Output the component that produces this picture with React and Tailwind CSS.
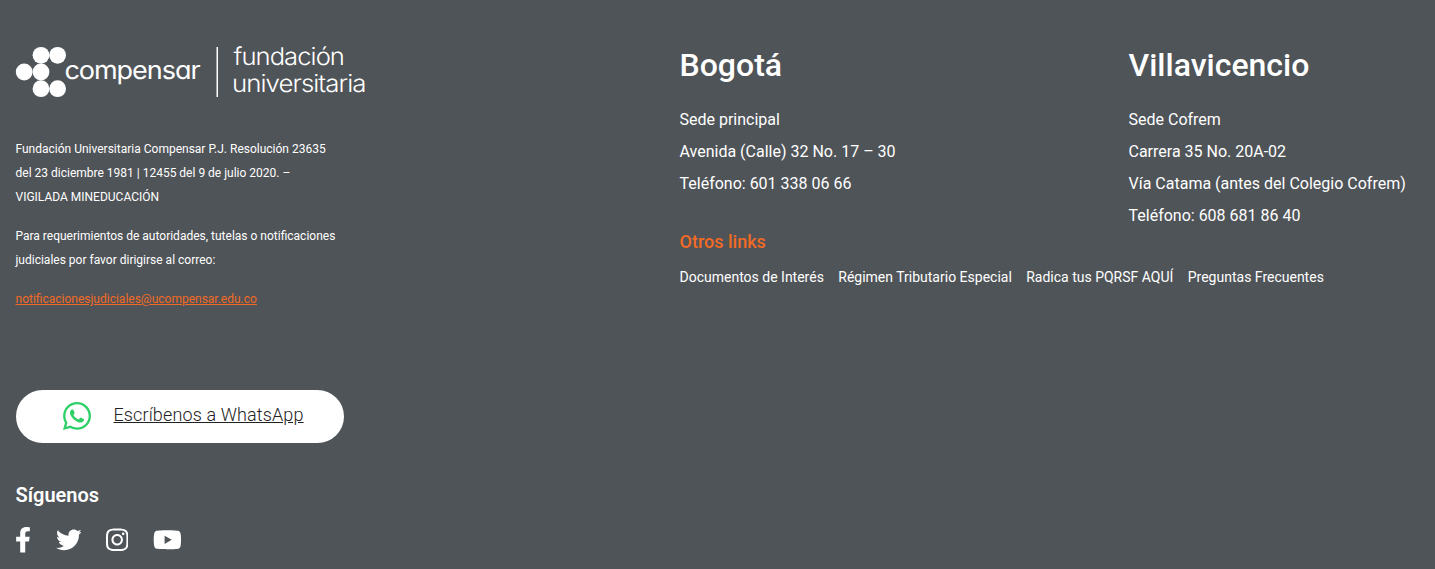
import { FaFacebookF, FaTwitter, FaInstagram, FaYoutube, FaWhatsapp } from "react-icons/fa";

const links = [
  "Documentos de Interés",
  "Régimen Tributario Especial",
  "Radica tus PQRSF AQUÍ",
  "Preguntas Frecuentes",
];

function Logo() {
  return (
    <svg
      className="-ml-[0.5px] mt-[46px] block h-[52px] w-[352px] overflow-visible [text-rendering:geometricPrecision]"
      viewBox="15 46 352 52"
      fill="#fff"
      role="img"
    >
      <circle cx="41" cy="55.3" r="8.4" />
      <circle cx="57.6" cy="55.3" r="8.4" />
      <circle cx="24.2" cy="72" r="8.4" />
      <circle cx="41" cy="72" r="8.4" />
      <circle cx="41" cy="88.7" r="8.4" />
      <circle cx="57.6" cy="88.7" r="8.4" />
      <text
        x="64.5"
        y="78.6"
        className="font-['Inter',sans-serif] [font-feature-settings:'cv11']"
        fontWeight="400"
        fontSize="25.5"
        letterSpacing="-1"
        textLength="135"
        lengthAdjust="spacingAndGlyphs"
      >
        compensar
      </text>
      <rect x="216.5" y="47" width="1.5" height="50" />
      <g className="font-['Inter',sans-serif]" fontWeight="300" fontSize="24.5" letterSpacing="-0.9">
        <text x="233.5" y="65.3" textLength="110.5" lengthAdjust="spacingAndGlyphs">fundación</text>
        <text x="232" y="92.3" textLength="133.5" lengthAdjust="spacingAndGlyphs">universitaria</text>
      </g>
    </svg>
  );
}

function Sede({ title, lines }) {
  return (
    <section className="whitespace-nowrap">
      <h2 className="text-[32px] leading-[40px] font-medium">{title}</h2>
      <div className="mt-[19px] text-base leading-8">
        {lines.map((line) => (
          <p key={line}>{line}</p>
        ))}
      </div>
    </section>
  );
}

export default function App() {
  return (
    <footer className="flex h-[569px] overflow-hidden bg-[#4f5458] pl-[15.5px] font-['Roboto',sans-serif] text-white">
      <div className="w-[664px] shrink-0">
        <Logo />
        <div className="mt-[39px] flex w-[330px] flex-col gap-[15px] text-xs leading-6">
          <p>
            Fundación Universitaria Compensar P.J. Resolución 23635
            <br />
            del 23 diciembre 1981 | 12455 del 9 de julio 2020. –<br />
            VIGILADA MINEDUCACIÓN
          </p>
          <p>
            Para requerimientos de autoridades, tutelas o notificaciones
            <br />
            judiciales por favor dirigirse al correo:
          </p>
          <p>
            <a href="#" className="text-[#f26a24] underline">notificacionesjudiciales@ucompensar.edu.co</a>
          </p>
        </div>
        <a href="#" className="mt-[79px] ml-[0.5px] flex h-[53px] w-[328px] items-center rounded-full bg-white pl-[44.5px] text-[#222]">
          <FaWhatsapp className="mb-px size-[32px] text-[#2fd068]" />
          <span className="mb-[3px] ml-[21px] text-lg font-light tracking-[0.13px] underline">Escríbenos a WhatsApp</span>
        </a>
        <h3 className="mt-[40px] text-xl leading-6 font-semibold">Síguenos</h3>
        <div className="-ml-[0.5px] mt-[20px] flex items-center gap-[24.6px]">
          <FaFacebookF className="h-[25.6px] w-[16px]" />
          <FaTwitter className="size-[25.6px]" />
          <FaInstagram className="h-[25.6px] w-[22.4px]" />
          <FaYoutube className="h-[25.6px] w-[28.8px]" />
        </div>
      </div>
      <div className="grow pt-[45px]">
        <div className="grid h-[186px] grid-cols-[449px_1fr]">
          <Sede title="Bogotá" lines={["Sede principal", "Avenida (Calle) 32 No. 17 – 30", "Teléfono: 601 338 06 66"]} />
          <Sede
            title="Villavicencio"
            lines={["Sede Cofrem", "Carrera 35 No. 20A-02", "Vía Catama (antes del Colegio Cofrem)", "Teléfono: 608 681 86 40"]}
          />
        </div>
        <h3 className="text-lg leading-[22px] font-medium text-[#f26a24]">Otros links</h3>
        <nav className="mt-[14px] flex gap-[14.4px] text-sm leading-5 whitespace-nowrap">
          {links.map((link) => (
            <a href="#" key={link}>{link}</a>
          ))}
        </nav>
      </div>
    </footer>
  );
}
